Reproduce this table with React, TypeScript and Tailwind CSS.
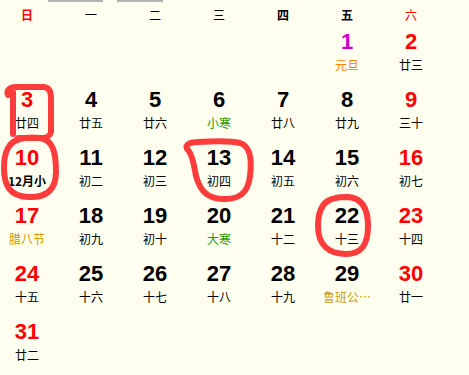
import React from "react";

type Day = { d: number; l: string; dc?: string; lc?: string; lb?: boolean };

const RED = "text-[#ff0000]";

const weeks: (Day | null)[][] = [
  [null, null, null, null, null, { d: 1, l: "元旦", dc: "text-[#cc00cc]", lc: "text-[#ff8000]" }, { d: 2, l: "廿三", dc: RED }],
  [
    { d: 3, l: "廿四", dc: RED },
    { d: 4, l: "廿五" },
    { d: 5, l: "廿六" },
    { d: 6, l: "小寒", lc: "text-[#339900]" },
    { d: 7, l: "廿八" },
    { d: 8, l: "廿九" },
    { d: 9, l: "三十", dc: RED },
  ],
  [
    { d: 10, l: "12月小", dc: RED, lb: true },
    { d: 11, l: "初二" },
    { d: 12, l: "初三" },
    { d: 13, l: "初四" },
    { d: 14, l: "初五" },
    { d: 15, l: "初六" },
    { d: 16, l: "初七", dc: RED },
  ],
  [
    { d: 17, l: "腊八节", dc: RED, lc: "text-[#cc9900]" },
    { d: 18, l: "初九" },
    { d: 19, l: "初十" },
    { d: 20, l: "大寒", lc: "text-[#339900]" },
    { d: 21, l: "十二" },
    { d: 22, l: "十三" },
    { d: 23, l: "十四", dc: RED },
  ],
  [
    { d: 24, l: "十五", dc: RED },
    { d: 25, l: "十六" },
    { d: 26, l: "十七" },
    { d: 27, l: "十八" },
    { d: 28, l: "十九" },
    { d: 29, l: "鲁班公…", lc: "text-[#cc9900]" },
    { d: 30, l: "廿一", dc: RED },
  ],
  [{ d: 31, l: "廿二", dc: RED }, null, null, null, null, null, null],
];

const heads = [
  { t: "日", c: "text-[#ff0000] font-bold" },
  { t: "一", c: "text-black" },
  { t: "二", c: "text-black" },
  { t: "三", c: "text-black" },
  { t: "四", c: "text-black font-bold" },
  { t: "五", c: "text-black font-bold" },
  { t: "六", c: "text-[#ff0000]" },
];

const cjk = "font-['Noto_Sans_CJK_SC',sans-serif]";

function Cell({ day }: { day: Day | null }) {
  if (!day) return <div className="h-[58px]" />;
  return (
    <div className="h-[58px] pt-[2px] flex flex-col items-center">
      <div
        className={`font-['Liberation_Sans',Arial,sans-serif] font-bold text-[22px] leading-[24px] ${day.dc ?? "text-black"}`}
      >
        {day.d}
      </div>
      <div
        className={`mt-[3px] ${cjk} text-[12px] leading-[16px] whitespace-nowrap ${day.lc ?? "text-black"} ${day.lb ? "font-bold" : ""}`}
      >
        {day.l}
      </div>
    </div>
  );
}

export default function App() {
  return (
    <div className="relative w-[469px] h-[375px] overflow-hidden bg-[#fffff0]">
      <div className="flex gap-[14px] pl-[48px]">
        <div className="w-[55px] h-[2px] bg-[#b4b4b4]" />
        <div className="w-[46px] h-[2px] bg-[#b4b4b4]" />
      </div>
      <div className="-ml-[5px] w-[448px]">
        <div className="grid grid-cols-[repeat(7,64px)] h-[26px] items-center">
          {heads.map((h) => (
            <div key={h.t} className={`text-center ${cjk} text-[12px] leading-[16px] ${h.c}`}>
              {h.t}
            </div>
          ))}
        </div>
        {weeks.map((w, i) => (
          <div key={i} className="grid grid-cols-[repeat(7,64px)]">
            {w.map((d, j) => (
              <Cell key={j} day={d} />
            ))}
          </div>
        ))}
      </div>

      <svg
        className="absolute inset-0 pointer-events-none"
        width="469"
        height="375"
        viewBox="0 0 469 375"
      >
        <g fill="none" stroke="#ff3c3c" strokeWidth="6" strokeLinecap="round" strokeLinejoin="round">
          <path d="M8 95 C6 90 10 87 16 87 L44 87 C50 88 51 92 51 100 L51 132 C50 137 46 138 40 138 L18 138 M13 92 L13 134" />
          <path d="M20 139 C8 142 4 152 4 168 C4 186 10 196 28 197 C46 198 56 190 56 172 C56 150 52 140 40 138 C32 137 24 138 20 139" />
          <path d="M188 150 C184 146 188 142 198 142 C214 141 232 141 240 143 C250 146 252 160 250 176 C248 194 238 200 222 199 C206 198 200 190 196 176 C194 164 192 154 188 150" />
          <path d="M336 198 C322 200 318 212 318 226 C318 246 330 254 346 254 C362 254 368 244 368 226 C368 208 362 198 348 197 C342 197 338 197 336 198" />
        </g>
      </svg>
    </div>
  );
}
